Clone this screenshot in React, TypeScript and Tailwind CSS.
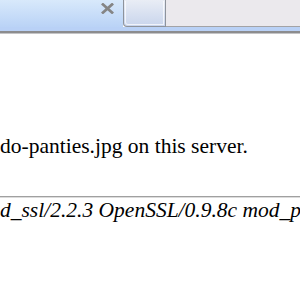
export default function App() {
  return (
    <div className="w-[300px] h-[300px] overflow-hidden bg-white text-black [font-family:'Liberation_Serif','Times_New_Roman',serif]">
      {/* tab strip */}
      <div className="flex h-[27px]">
        <div className="relative w-[123px] bg-gradient-to-b from-[#d8e9fb] to-[#bad3f6]">
          <svg className="absolute left-[101px] top-[3px]" width="13" height="11" viewBox="0 0 13 11">
            <path d="M2 1.5 L11 9.5 M11 1.5 L2 9.5" stroke="#858585" strokeWidth="2.8" strokeLinecap="square" />
          </svg>
        </div>
        <div className="w-[43px] rounded-bl-[4px] border-x border-b border-[#8e939b] bg-gradient-to-b from-[#e9edf5] to-[#c9d5ec] p-px">
          <div className="h-full rounded-bl-[3px] border-x border-b border-white/70" />
        </div>
        <div className="flex-1 border-b border-[#a3a3a6] bg-[#ebe9ed]" />
      </div>
      <div className="h-[4px] bg-[#b9d1f6]" />
      <div className="h-[2px] bg-[#8c8c8e]" />
      <div className="h-[1px] bg-[#c4c4c6]" />

      {/* page body */}
      <div className="overflow-hidden whitespace-nowrap pt-[100px] text-[21.5px] leading-[24px]">
        <p>do-panties.jpg on this server.</p>
        <div className="mt-[38px] h-[2px] border-t border-b border-t-[#a0a0a0] border-b-[#dcdcdc]" />
        <p className="italic">d_ssl/2.2.3 OpenSSL/0.9.8c mod_perl/2.0.4 Perl/v5.8.8</p>
      </div>
    </div>
  )
}
